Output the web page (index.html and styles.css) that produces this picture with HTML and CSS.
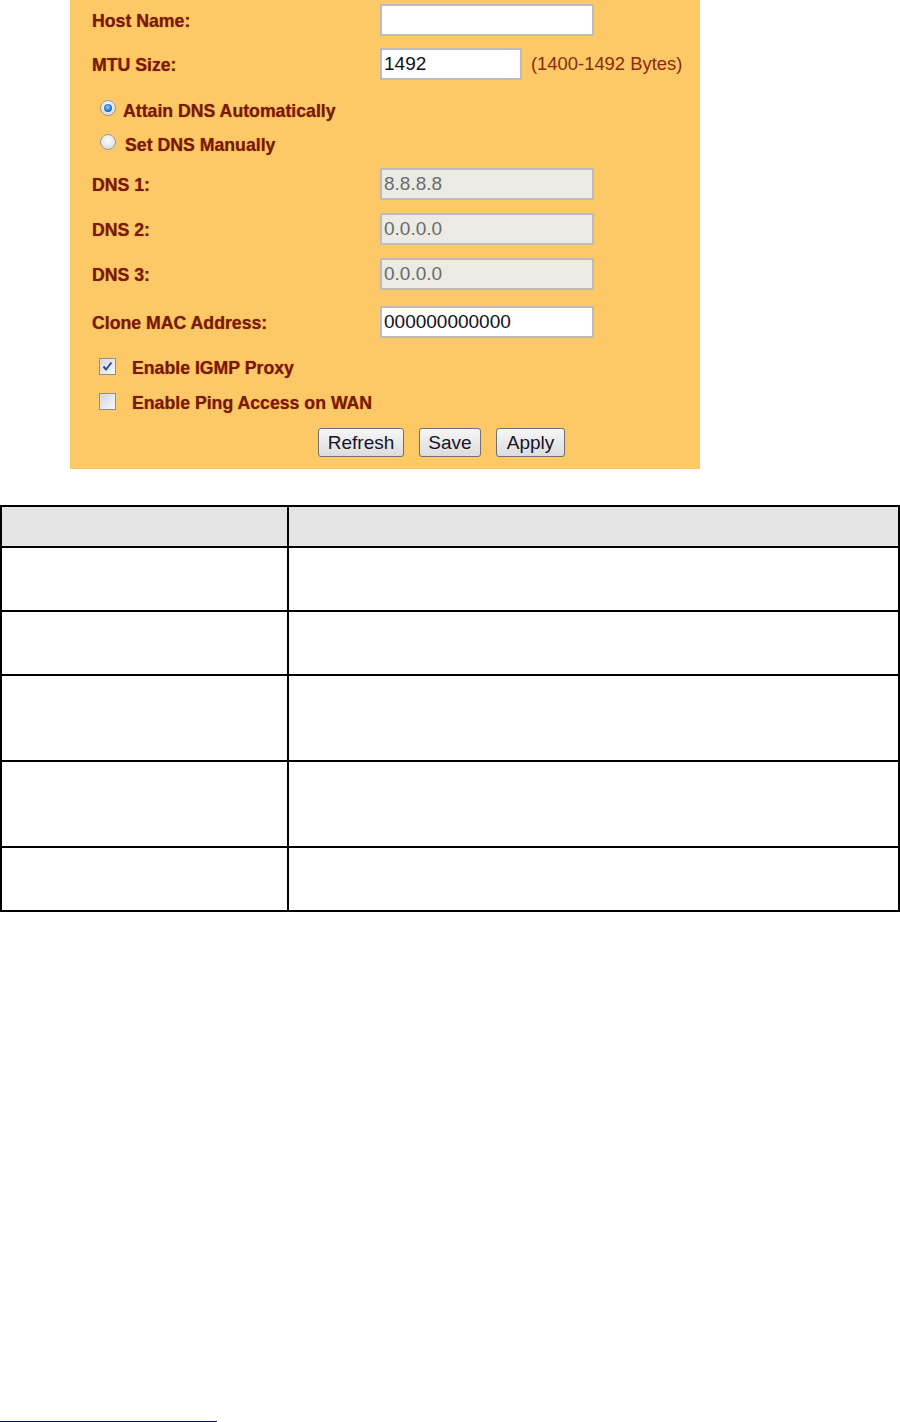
FILE: index.html
```html
<!DOCTYPE html>
<html>

<head>
    <link rel="stylesheet" href="styles.css">
</head>

<body>
    <div class="panel">
        <div class="row row-host">
            <span class="label">Host Name:</span>
            <span class="field wide"></span>
        </div>
        <div class="row row-mtu">
            <span class="label">MTU Size:</span>
            <span class="field short">1492</span>
            <span class="hint">(1400-1492 Bytes)</span>
        </div>
        <div class="row opt row-auto">
            <span class="radio on"></span>
            <span class="label">Attain DNS Automatically</span>
        </div>
        <div class="row opt row-manual">
            <span class="radio"></span>
            <span class="label">Set DNS Manually</span>
        </div>
        <div class="row row-dns1">
            <span class="label">DNS 1:</span>
            <span class="field wide off">8.8.8.8</span>
        </div>
        <div class="row row-dns">
            <span class="label">DNS 2:</span>
            <span class="field wide off">0.0.0.0</span>
        </div>
        <div class="row row-dns">
            <span class="label">DNS 3:</span>
            <span class="field wide off">0.0.0.0</span>
        </div>
        <div class="row row-mac">
            <span class="label">Clone MAC Address:</span>
            <span class="field wide">000000000000</span>
        </div>
        <div class="row opt row-igmp">
            <span class="check on">
                <svg width="13" height="13" viewBox="0 0 13 13">
                    <path d="M2.5 6.5 L5 9.5 L10.5 2.5" fill="none" stroke="#2b4c9a" stroke-width="2"/>
                </svg>
            </span>
            <span class="label">Enable IGMP Proxy</span>
        </div>
        <div class="row opt row-ping">
            <span class="check"></span>
            <span class="label">Enable Ping Access on WAN</span>
        </div>
        <div class="buttons">
            <span class="btn btn-refresh">Refresh</span>
            <span class="btn btn-save">Save</span>
            <span class="btn btn-apply">Apply</span>
        </div>
    </div>

    <table class="desc">
        <tr class="head">
            <td class="col-name"></td>
            <td></td>
        </tr>
        <tr class="short-row">
            <td></td>
            <td></td>
        </tr>
        <tr class="short-row">
            <td></td>
            <td></td>
        </tr>
        <tr class="tall-row">
            <td></td>
            <td></td>
        </tr>
        <tr class="tall-row">
            <td></td>
            <td></td>
        </tr>
        <tr class="short-row">
            <td></td>
            <td></td>
        </tr>
    </table>

    <div class="footnote-rule"></div>
</body>

</html>
```

FILE: styles.css
```css
body {
    margin: 0;
    background-color: #fff;
    font-family: "Liberation Sans", Arial, sans-serif;
}

/* ROUTER FORM PANEL */
.panel {
    margin-left: 70px;
    width: 630px;
    height: 469px;
    box-sizing: border-box;
    padding-top: 4px;
    padding-left: 22px;
    background-color: #fcc966;
}

.row {
    display: flex;
    align-items: center;
    height: 32px;
}

.row-mtu { margin-top: 12px; }
.row-auto { margin-top: 13px; }
.row-dns1 { margin-top: 7px; }
.row-dns { margin-top: 13px; }
.row-mac { margin-top: 16px; }
.row-igmp { margin-top: 12px; }
.row-ping { margin-top: 1px; }

.opt {
    height: 34px;
    padding-left: 8px;
}

.label {
    width: 288px;
    flex: none;
    font-size: 17.7px;
    font-weight: bold;
    color: #761a0a;
    text-shadow: 0 0 1px #c2561c;
    position: relative;
    top: 1px;
}

.opt .label {
    width: auto;
}

.field {
    height: 32px;
    box-sizing: border-box;
    border: 2px solid #bcbcbc;
    background-color: #fff;
    padding-left: 2px;
    font-size: 19px;
    line-height: 28px;
    color: #10101c;
}

.wide { width: 214px; }
.short { width: 142px; }

.off {
    background-color: #ebeae4;
    color: #6a6a6a;
}

.hint {
    margin-left: 9px;
    font-size: 18.4px;
    color: #8a2a10;
}

/* RADIO & CHECKBOX */
.radio {
    width: 16px;
    height: 16px;
    box-sizing: border-box;
    border: 1px solid #9a9a9a;
    border-radius: 50%;
    background: radial-gradient(circle at 50% 40%, #ffffff, #d2d2d2);
    margin-right: 7px;
    position: relative;
    top: -2px;
}

.radio.on::after {
    content: "";
    position: absolute;
    left: 3px;
    top: 3px;
    width: 8px;
    height: 8px;
    border-radius: 50%;
    background: radial-gradient(circle at 45% 40%, #8fd0ff, #1f6fc0 60%, #123f78);
}

.row-manual .radio {
    margin-right: 9px;
}

.check {
    width: 17px;
    height: 17px;
    box-sizing: border-box;
    border: 1px solid #8f8f8f;
    background: linear-gradient(135deg, #d3d6dc, #f8f8f8);
    margin-left: -1px;
    margin-right: 16px;
    display: flex;
    align-items: center;
    justify-content: center;
    position: relative;
    top: -1px;
}

/* BUTTONS */
.buttons {
    display: flex;
    gap: 15px;
    margin-top: 9px;
    padding-left: 226px;
}

.btn {
    height: 29px;
    box-sizing: border-box;
    border: 1px solid #707070;
    border-radius: 3px;
    background: linear-gradient(#f6f6f6, #dcdcdc);
    font-size: 19px;
    line-height: 27px;
    text-align: center;
    color: #14142a;
}

.btn-refresh { width: 86px; }
.btn-save { width: 62px; }
.btn-apply { width: 69px; }

/* DESCRIPTION TABLE */
.desc {
    margin-top: 36px;
    width: 900px;
    border-collapse: collapse;
}

.desc td {
    border: 2px solid #000;
    padding: 0;
}

.col-name {
    width: 285px;
}

.head td {
    height: 39px;
    background-color: #e5e5e5;
}

.short-row td {
    height: 62px;
}

.tall-row td {
    height: 84px;
}

.footnote-rule {
    margin-top: 509px;
    width: 217px;
    height: 1px;
    background-color: #0a0a5c;
}
```
